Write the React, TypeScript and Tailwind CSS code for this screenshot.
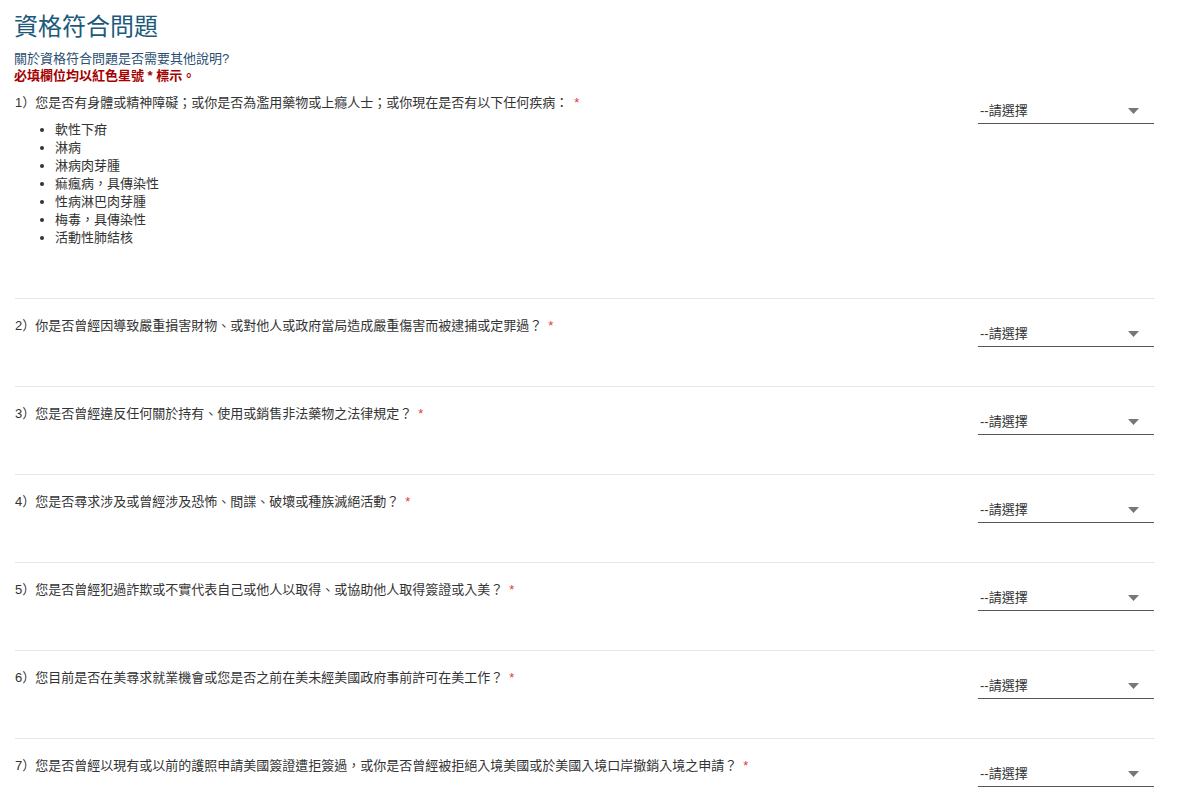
import React from 'react';

const font = { fontFamily: '"Liberation Sans", "Noto Sans CJK TC", sans-serif' };

const questions = [
  '你是否曾經因導致嚴重損害財物、或對他人或政府當局造成嚴重傷害而被逮捕或定罪過？',
  '您是否曾經違反任何關於持有、使用或銷售非法藥物之法律規定？',
  '您是否尋求涉及或曾經涉及恐怖、間諜、破壞或種族滅絕活動？',
  '您是否曾經犯過詐欺或不實代表自己或他人以取得、或協助他人取得簽證或入美？',
  '您目前是否在美尋求就業機會或您是否之前在美未經美國政府事前許可在美工作？',
  '您是否曾經以現有或以前的護照申請美國簽證遭拒簽過，或你是否曾經被拒絕入境美國或於美國入境口岸撤銷入境之申請？',
];

const diseases = ['軟性下疳', '淋病', '淋病肉芽腫', '痲瘋病，具傳染性', '性病淋巴肉芽腫', '梅毒，具傳染性', '活動性肺結核'];

const Select = () => (
  <div className="mt-[5px] w-[176px] h-[25px] mr-px flex items-center justify-between border-b-[1.5px] border-[#555] shrink-0">
    <span className="text-[13px] text-[#333] pl-[2px]">--請選擇</span>
    <svg width="11" height="6" viewBox="0 0 11 6" className="mr-[15px]">
      <path d="M0 0h11L5.5 6z" fill="#777" />
    </svg>
  </div>
);

const Star = () => <span className="text-[#e53935] ml-[6px]">*</span>;

export default function App() {
  return (
    <div className="min-h-screen bg-white text-[#333]" style={font}>
      <div className="px-[14px] pt-[11px]">
        <h1 className="text-[24px] leading-[32px] text-[#1c5a7c]">資格符合問題</h1>
        <p className="mt-[7px] text-[13px] leading-[17px] text-[#2b4f70]">關於資格符合問題是否需要其他說明?</p>
        <p className="text-[13px] leading-[17px] font-bold text-[#a30000]">必填欄位均以紅色星號 * 標示。</p>
      </div>

      <div className="mx-[15px] w-[1140px]">
        <div className="flex justify-between pt-[10px] pb-[51px]">
          <div className="text-[13px] leading-[18px]">
            <div>
              1）您是否有身體或精神障礙；或你是否為濫用藥物或上癮人士；或你現在是否有以下任何疾病：
              <Star />
            </div>
            <ul className="mt-[9px] list-disc pl-[40px]">
              {diseases.map((d) => (
                <li key={d} className="leading-[18px]">{d}</li>
              ))}
            </ul>
          </div>
          <Select />
        </div>

        {questions.map((q, i) => (
          <div key={i} className="flex justify-between border-t border-[#e6e6e6] h-[88px] pt-[18px]">
            <div className="text-[13px] leading-[18px]">
              {i + 2}）{q}
              <Star />
            </div>
            <Select />
          </div>
        ))}
      </div>
    </div>
  );
}
